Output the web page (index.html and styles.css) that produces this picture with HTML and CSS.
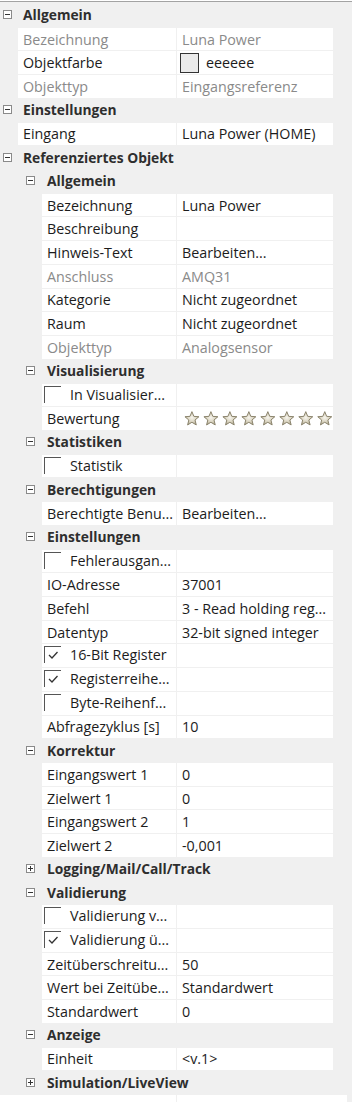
FILE: index.html
```html
<!DOCTYPE html>
<html lang="de">
<head>
<meta charset="utf-8">
<title>Eigenschaften</title>
<link rel="stylesheet" href="styles.css">
</head>
<body>
<svg class="defs" width="0" height="0" aria-hidden="true">
  <defs>
    <radialGradient id="sg" cx="50%" cy="45%" r="60%">
      <stop offset="0" stop-color="#f7f5ee"/>
      <stop offset="0.55" stop-color="#d9d3bf"/>
      <stop offset="1" stop-color="#a39b83"/>
    </radialGradient>
    <polygon id="star" points="0,-7.4 1.95,-2.66 7.04,-2.29 3.13,1.02 4.35,5.99 0,3.3 -4.35,5.99 -3.13,1.02 -7.04,-2.29 -1.95,-2.66" fill="url(#sg)" stroke="#8a836c" stroke-width="1" stroke-linejoin="round"/>
    <polyline id="tick" points="5,9 8,12 13.5,6" fill="none" stroke="#333" stroke-width="1.3"/>
  </defs>
</svg>
<div class="panel">
  <div class="row cat l0"><span class="tog minus"></span><span class="clabel">Allgemein</span></div>
  <div class="row item i1 dis"><span class="name">Bezeichnung</span><span class="val">Luna Power</span></div>
  <div class="row item i1"><span class="name">Objektfarbe</span><span class="val"><span class="swatch"></span>eeeeee</span></div>
  <div class="row item i1 dis"><span class="name">Objekttyp</span><span class="val">Eingangsreferenz</span></div>
  <div class="row cat l0"><span class="tog minus"></span><span class="clabel">Einstellungen</span></div>
  <div class="row item i1"><span class="name">Eingang</span><span class="val">Luna Power (HOME)</span></div>
  <div class="row cat l0"><span class="tog minus"></span><span class="clabel">Referenziertes Objekt</span></div>
  <div class="row cat l1"><span class="tog minus"></span><span class="clabel">Allgemein</span></div>
  <div class="row item i2"><span class="name">Bezeichnung</span><span class="val">Luna Power</span></div>
  <div class="row item i2"><span class="name">Beschreibung</span><span class="val"></span></div>
  <div class="row item i2"><span class="name">Hinweis-Text</span><span class="val">Bearbeiten...</span></div>
  <div class="row item i2 dis"><span class="name">Anschluss</span><span class="val">AMQ31</span></div>
  <div class="row item i2"><span class="name">Kategorie</span><span class="val">Nicht zugeordnet</span></div>
  <div class="row item i2"><span class="name">Raum</span><span class="val">Nicht zugeordnet</span></div>
  <div class="row item i2 dis"><span class="name">Objekttyp</span><span class="val">Analogsensor</span></div>
  <div class="row cat l1"><span class="tog minus"></span><span class="clabel">Visualisierung</span></div>
  <div class="row item i2"><span class="name chkname"><span class="box"></span>In Visualisier...</span><span class="val"></span></div>
  <div class="row item i2"><span class="name">Bewertung</span><span class="val">
    <svg class="stars" width="152" height="16" viewBox="0 0 152 16" aria-label="Bewertung">
      <use href="#star" x="10" y="8"/><use href="#star" x="29.1" y="8"/><use href="#star" x="48.2" y="8"/><use href="#star" x="67.3" y="8"/>
      <use href="#star" x="86.4" y="8"/><use href="#star" x="105.5" y="8"/><use href="#star" x="124.6" y="8"/><use href="#star" x="143.7" y="8"/>
    </svg></span></div>
  <div class="row cat l1"><span class="tog minus"></span><span class="clabel">Statistiken</span></div>
  <div class="row item i2"><span class="name chkname"><span class="box"></span>Statistik</span><span class="val"></span></div>
  <div class="row cat l1"><span class="tog minus"></span><span class="clabel">Berechtigungen</span></div>
  <div class="row item i2"><span class="name">Berechtigte Benu...</span><span class="val">Bearbeiten...</span></div>
  <div class="row cat l1"><span class="tog minus"></span><span class="clabel">Einstellungen</span></div>
  <div class="row item i2"><span class="name chkname"><span class="box"></span>Fehlerausgan...</span><span class="val"></span></div>
  <div class="row item i2"><span class="name">IO-Adresse</span><span class="val">37001</span></div>
  <div class="row item i2"><span class="name">Befehl</span><span class="val">3 - Read holding reg...</span></div>
  <div class="row item i2"><span class="name">Datentyp</span><span class="val">32-bit signed integer</span></div>
  <div class="row item i2"><span class="name chkname"><span class="box"><svg width="17" height="17" viewBox="0 0 17 17"><use href="#tick"/></svg></span>16-Bit Register</span><span class="val"></span></div>
  <div class="row item i2"><span class="name chkname"><span class="box"><svg width="17" height="17" viewBox="0 0 17 17"><use href="#tick"/></svg></span>Registerreihe...</span><span class="val"></span></div>
  <div class="row item i2"><span class="name chkname"><span class="box"></span>Byte-Reihenf...</span><span class="val"></span></div>
  <div class="row item i2"><span class="name">Abfragezyklus [s]</span><span class="val">10</span></div>
  <div class="row cat l1"><span class="tog minus"></span><span class="clabel">Korrektur</span></div>
  <div class="row item i2"><span class="name">Eingangswert 1</span><span class="val">0</span></div>
  <div class="row item i2"><span class="name">Zielwert 1</span><span class="val">0</span></div>
  <div class="row item i2"><span class="name">Eingangswert 2</span><span class="val">1</span></div>
  <div class="row item i2"><span class="name">Zielwert 2</span><span class="val">-0,001</span></div>
  <div class="row cat l1"><span class="tog plus"></span><span class="clabel">Logging/Mail/Call/Track</span></div>
  <div class="row cat l1"><span class="tog minus"></span><span class="clabel">Validierung</span></div>
  <div class="row item i2"><span class="name chkname"><span class="box"></span>Validierung v...</span><span class="val"></span></div>
  <div class="row item i2"><span class="name chkname"><span class="box"><svg width="17" height="17" viewBox="0 0 17 17"><use href="#tick"/></svg></span>Validierung ü...</span><span class="val"></span></div>
  <div class="row item i2"><span class="name">Zeitüberschreitu...</span><span class="val">50</span></div>
  <div class="row item i2"><span class="name">Wert bei Zeitübe...</span><span class="val">Standardwert</span></div>
  <div class="row item i2"><span class="name">Standardwert</span><span class="val">0</span></div>
  <div class="row cat l1"><span class="tog minus"></span><span class="clabel">Anzeige</span></div>
  <div class="row item i2"><span class="name">Einheit</span><span class="val">&lt;v.1&gt;</span></div>
  <div class="row cat l1"><span class="tog plus"></span><span class="clabel">Simulation/LiveView</span></div>
  <div class="row item i0"><span class="name"></span><span class="val"></span></div>
</div>
</body>
</html>
```
FILE: styles.css
```css
html, body {
  margin: 0;
  padding: 0;
  background: #ffffff;
}
body {
  font-family: "Open Sans", "Noto Sans", sans-serif;
  font-size: 14.3px;
  color: #1c1c1c;
}
.defs {
  position: absolute;
  width: 0;
  height: 0;
}
.panel {
  width: 352px;
  margin-top: 1px;
  border-top: 1px solid #a3a3a3;
  padding-top: 1px;
  background: #f0f0f0;
  height: 1101px;
  box-sizing: border-box;
  overflow: hidden;
}
.row {
  display: flex;
  height: 23.72px;
  box-sizing: border-box;
}
.cat {
  align-items: center;
  font-weight: bold;
  font-size: 13.8px;
  color: #2e2e2e;
}
.tog {
  position: relative;
  flex: 0 0 auto;
  width: 9px;
  height: 9px;
  box-sizing: border-box;
  border: 1px solid #8a8a8a;
  background: #ffffff;
}
.tog::before {
  content: "";
  position: absolute;
  left: 1px;
  top: 3px;
  width: 5px;
  height: 1px;
  background: #333333;
}
.tog.plus::after {
  content: "";
  position: absolute;
  left: 3px;
  top: 1px;
  width: 1px;
  height: 5px;
  background: #333333;
}
.l0 .tog { margin-left: 3px; }
.l0 .clabel { margin-left: 11px; }
.l1 .tog { margin-left: 26px; }
.l1 .clabel { margin-left: 12px; }
.item {
  padding-top: 1px;
}
.i0 { padding-left: 0; }
.i1 { padding-left: 18px; }
.i2 { padding-left: 42px; }
.name, .val {
  display: flex;
  align-items: center;
  background: #ffffff;
  white-space: nowrap;
  overflow: hidden;
  box-sizing: border-box;
  padding-left: 5px;
}
.i1 .name { flex: 0 0 158px; }
.i2 .name { flex: 0 0 134px; }
.i0 .name { flex: 0 0 176px; }
.val {
  flex: 0 0 156px;
  margin-left: 1px;
}
.i0 .val { flex: 0 0 170px; }
.dis .name, .dis .val {
  color: #8a8a8a;
}
.swatch {
  flex: 0 0 auto;
  width: 19px;
  height: 20px;
  box-sizing: border-box;
  border: 1px solid #333333;
  background: #eaeaea;
  margin-left: -2px;
  margin-right: 7px;
}
.chkname {
  padding-left: 2px;
  align-items: flex-start;
  line-height: 22px;
}
.box {
  flex: 0 0 auto;
  width: 17px;
  height: 17px;
  margin-top: 2px;
  margin-right: 9px;
  box-sizing: border-box;
  border-top: 1.5px solid #555555;
  border-left: 1.5px solid #555555;
  position: relative;
}
.box svg {
  position: absolute;
  left: -1.5px;
  top: -1.5px;
}
.stars {
  display: block;
}
```
